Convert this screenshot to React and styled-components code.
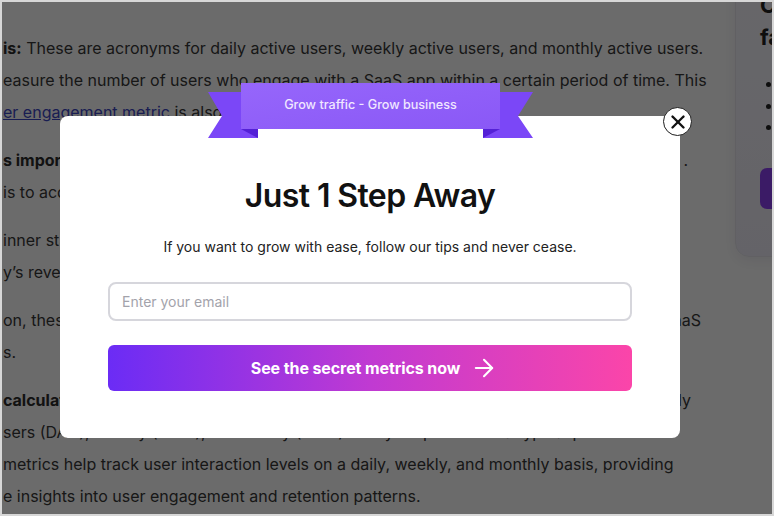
import React from 'react';
import styled, { createGlobalStyle } from 'styled-components';
import { X, ArrowRight } from 'lucide-react';

const GlobalStyle = createGlobalStyle`
  html, body { margin: 0; padding: 0; background: #fff; }
  body { font-family: Inter, "Noto Sans", sans-serif; }
  * { box-sizing: border-box; }
`;

const Frame = styled.div`
  position: relative;
  width: 774px;
  height: 516px;
  border: 2px solid #d7d7d7;
  overflow: hidden;
  display: flex;
  background: #fff;
`;

const Article = styled.main`
  width: 733px;
  flex-shrink: 0;
  padding: 30px 0 0 1px;
  overflow: hidden;
  color: #383838;
  font-size: 16px;
`;

const Paragraph = styled.p`
  margin: 0 0 16px;
`;

const Line = styled.span`
  display: ${(p) => (p.$fill ? 'flex' : 'block')};
  justify-content: space-between;
  width: ${(p) => (p.$fill ? `${p.$fill}px` : 'auto')};
  white-space: nowrap;
  line-height: 32px;
`;

const Strong = styled.strong`
  font-weight: 700;
  color: #2c2c2c;
`;

const Link = styled.a`
  color: #3d47c4;
  text-decoration: underline;
`;

const Sidebar = styled.aside`
  flex: 1;
  min-width: 0;
`;

const SideCard = styled.div`
  margin-top: -40px;
  width: 140px;
  height: 295px;
  background: linear-gradient(180deg, #f6f5fb 0%, #efedf7 100%);
  border: 1px solid #e6e5ec;
  border-radius: 14px;
  box-shadow: 0 4px 14px rgba(40, 30, 80, 0.08);
  padding: 26px 0 0 24px;
  white-space: nowrap;
`;

const SideTitle = styled.h3`
  margin: 0;
  font-size: 22px;
  line-height: 32px;
  font-weight: 700;
  color: #222;
`;

const SideList = styled.ul`
  margin: 20px 0 0;
  padding: 0 0 0 6px;
  list-style: disc inside;
  font-size: 14px;
  line-height: 21.5px;
  color: #222;
`;

const SideButton = styled.div`
  margin-top: 30px;
  height: 41px;
  border-radius: 7px;
  background: #8e42f2;
`;

const Overlay = styled.div`
  position: absolute;
  inset: 0;
  background: rgba(0, 0, 0, 0.58);
  padding: 114px 0 0 58px;
`;

const Modal = styled.div`
  position: relative;
  width: 620px;
  background: #fff;
  border-radius: 8px;
  padding: 60px 48px 47px;
  text-align: center;
`;

const RibbonShape = styled.svg`
  position: absolute;
  left: 147px;
  top: -33px;
  width: 327px;
  height: 56px;
  overflow: visible;
`;

const RibbonLabel = styled.div`
  position: absolute;
  left: 181px;
  top: -33px;
  width: 259px;
  height: 42px;
  display: flex;
  align-items: center;
  justify-content: center;
  font-size: 12.6px;
  font-weight: 500;
  color: #f0e7ff;
`;

const CloseButton = styled.button`
  position: absolute;
  right: -12px;
  top: -9px;
  width: 29px;
  height: 29px;
  border-radius: 50%;
  border: 1.5px solid #1d1d1d;
  background: #fff;
  padding: 0;
  display: flex;
  align-items: center;
  justify-content: center;
  color: #111;
  cursor: pointer;
`;

const Title = styled.h2`
  margin: 0;
  font-size: 32px;
  line-height: 40px;
  font-weight: 600;
  letter-spacing: -0.6px;
  color: #111;
`;

const Subtitle = styled.p`
  margin: 21px 0 0;
  font-size: 14px;
  line-height: 20px;
  color: #222;
`;

const EmailInput = styled.input`
  display: block;
  margin-top: 25px;
  width: 100%;
  height: 39px;
  border: 2px solid #d6d6dc;
  border-radius: 8px;
  padding: 0 12px;
  font-family: inherit;
  font-size: 14px;
  color: #222;
  outline: none;
  &::placeholder { color: #a3a3ab; }
`;

const CtaButton = styled.button`
  margin-top: 24px;
  width: 100%;
  height: 46px;
  border: none;
  border-radius: 6px;
  background: linear-gradient(90deg, #6b2cf5 0%, #c03ad2 50%, #fb45a9 100%);
  color: #fff;
  font-family: inherit;
  font-size: 16px;
  font-weight: 700;
  letter-spacing: -0.1px;
  display: flex;
  align-items: center;
  justify-content: center;
  gap: 10px;
  padding: 0 0 0 9px;
  cursor: pointer;
`;

export default function App() {
  return (
    <>
      <GlobalStyle />
      <Frame>
        <Article>
          <Paragraph>
            <Line><Strong>is:</Strong> These are acronyms for daily active users, weekly active users, and monthly active users.</Line>
            <Line>easure the number of users who engage with a SaaS app within a certain period of time. This</Line>
            <Line><Link>er engagement metric</Link> is also called a stickiness metric.</Line>
          </Paragraph>
          <Paragraph>
            <Line $fill={685}>
              <span><Strong>s important:</Strong> These numbers show how many people keep coming back again</span>
              <span>.</span>
            </Line>
            <Line>is to acquire new users and keep existing ones engaged with the app over time.</Line>
          </Paragraph>
          <Paragraph>
            <Line>inner stages of growth, these metrics directly reflect the health of the</Line>
            <Line>y’s revenue and the loyalty of its customer base across every segment.</Line>
          </Paragraph>
          <Paragraph>
            <Line $fill={698}>
              <span>on, these metrics offer a clear picture of the overall health and growth</span>
              <span>of a SaaS</span>
            </Line>
            <Line>s.</Line>
          </Paragraph>
          <Paragraph>
            <Line $fill={688}>
              <span><Strong>calculate:</Strong> To work these out, count the unique users who</span>
              <span>engage daily</span>
            </Line>
            <Line>sers (DAU), weekly (WAU), or monthly (MAU) with your product in a typical period.</Line>
            <Line>metrics help track user interaction levels on a daily, weekly, and monthly basis, providing</Line>
            <Line>e insights into user engagement and retention patterns.</Line>
          </Paragraph>
        </Article>
        <Sidebar>
          <SideCard>
            <SideTitle>Calculate<br />faster</SideTitle>
            <SideList>
              <li>Metrics</li>
              <li>Reports</li>
              <li>Growth</li>
            </SideList>
            <SideButton />
          </SideCard>
        </Sidebar>
        <Overlay>
          <Modal>
            <RibbonShape viewBox="0 0 327 56">
              <defs>
                <linearGradient id="rib" x1="0" y1="0" x2="1" y2="1">
                  <stop offset="0" stopColor="#9666fb" />
                  <stop offset="1" stopColor="#8a58f6" />
                </linearGradient>
              </defs>
              <polygon points="1,9 51,9 51,55 1,55 15,33" fill="#7b47f7" />
              <polygon points="326,9 276,9 276,55 326,55 311,33" fill="#7b47f7" />
              <polygon points="34,46 51,46 51,55" fill="#5420d6" />
              <polygon points="293,46 276,46 276,55" fill="#5420d6" />
              <rect x="34" y="0" width="259" height="46" fill="url(#rib)" />
            </RibbonShape>
            <RibbonLabel>Grow traffic - Grow business</RibbonLabel>
            <CloseButton aria-label="Close">
              <X size={22} strokeWidth={2.6} />
            </CloseButton>
            <Title>Just 1 Step Away</Title>
            <Subtitle>If you want to grow with ease, follow our tips and never cease.</Subtitle>
            <EmailInput type="email" placeholder="Enter your email" />
            <CtaButton>
              See the secret metrics now
              <ArrowRight size={28} strokeWidth={1.8} />
            </CtaButton>
          </Modal>
        </Overlay>
      </Frame>
    </>
  );
}
